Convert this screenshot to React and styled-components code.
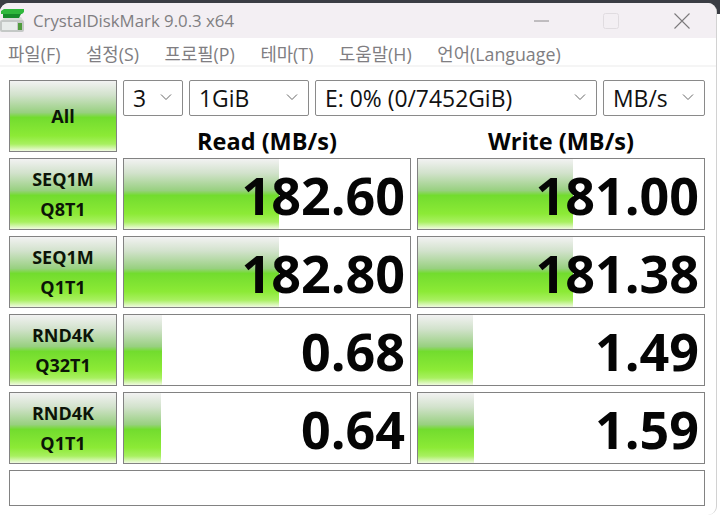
import styled, { createGlobalStyle } from 'styled-components';

const GlobalStyle = createGlobalStyle`
  html, body {
    margin: 0;
    padding: 0;
    width: 720px;
    height: 515px;
    overflow: hidden;
    background: #fff;
  }
  * {
    box-sizing: border-box;
  }
`;

const Screen = styled.div`
  width: 720px;
  height: 515px;
  padding-top: 3px;
  overflow: hidden;
  background: linear-gradient(180deg, #3a3d44 0, #3a3d44 14px, #fff 14px);
`;

const Window = styled.div`
  width: 717px;
  height: 512px;
  background: #fff;
  border-radius: 9px 9px 9px 0;
  border-right: 1px solid #d2d2d2;
  overflow: hidden;
  font-family: "Open Sans", "Noto Sans CJK KR", sans-serif;
`;

const TitleBar = styled.div`
  height: 35px;
  display: flex;
  align-items: center;
  background: #f3eff3;
`;

const AppIcon = styled.svg`
  width: 25px;
  height: 26px;
  flex: none;
  margin-top: 1px;
`;

const TitleText = styled.span`
  margin-left: 8px;
  font-size: 16.8px;
  color: #807e81;
`;

const WindowControls = styled.div`
  margin-left: auto;
  display: flex;
  align-items: center;
  gap: 53px;
  padding-right: 25px;
`;

const ControlIcon = styled.svg`
  width: 18px;
  height: 18px;
  display: block;
`;

const MenuBar = styled.div`
  height: 29px;
  display: flex;
  align-items: center;
  gap: 25.6px;
  padding: 2px 0 0 8px;
  border-bottom: 2px solid #f5f5f5;
  font-size: 17.8px;
  color: #807e82;
`;

const Content = styled.div`
  display: grid;
  grid-template-columns: 108px 288px 288px;
  grid-template-rows: 36px 30px repeat(4, 72px) 36px;
  column-gap: 6px;
  row-gap: 6px;
  padding: 13px 0 0 9px;
`;

const green = `linear-gradient(180deg,
  #f2f2f2 0%,
  #d2e2cc 20%,
  #98d080 45%,
  #72dc2e 52%,
  #8cea36 78%,
  #a8f060 90%,
  #f0fae0 100%)`;

const TestButton = styled.div`
  grid-column: 1;
  grid-row: ${(p) => p.$row};
  display: flex;
  flex-direction: column;
  align-items: center;
  justify-content: center;
  gap: 7px;
  border: 1px solid #828282;
  background: ${green};
  font-size: 18px;
  line-height: 23px;
  font-weight: 700;
  color: #0c1408;
`;

const Selects = styled.div`
  grid-column: 2 / span 2;
  grid-row: 1;
  display: flex;
  gap: 6px;
`;

const Select = styled.div`
  width: ${(p) => p.$width}px;
  display: flex;
  align-items: center;
  justify-content: space-between;
  padding: 0 10px 0 9px;
  border: 1px solid #8a8a8a;
  border-radius: 2px;
  font-size: 22.9px;
  color: #111;
`;

const Chevron = styled.svg`
  width: 12px;
  height: 8px;
  flex: none;
  margin-top: -3px;
`;

const ColumnHead = styled.div`
  grid-column: ${(p) => p.$col};
  grid-row: 2;
  align-self: end;
  margin-bottom: -3px;
  text-align: center;
  font-size: 23.5px;
  line-height: 27px;
  font-weight: 700;
  color: #050505;
`;

const ResultCell = styled.div`
  grid-column: ${(p) => p.$col};
  grid-row: ${(p) => p.$row};
  position: relative;
  display: flex;
  align-items: center;
  justify-content: flex-end;
  padding: 2px 5px 0 0;
  border: 1px solid #828282;
  background: #fff;
`;

const Bar = styled.div`
  position: absolute;
  left: 0;
  top: 0;
  bottom: 0;
  background: ${green};
`;

const Value = styled.span`
  position: relative;
  font-size: 52px;
  line-height: 1;
  font-weight: 700;
  color: #050505;
`;

const MessageBox = styled.div`
  grid-column: 1 / span 3;
  grid-row: 7;
  border: 1px solid #828282;
`;

const menus = ['파일(F)', '설정(S)', '프로필(P)', '테마(T)', '도움말(H)', '언어(Language)'];

const selects = [
  { label: '3', width: 60 },
  { label: '1GiB', width: 120 },
  { label: 'E: 0% (0/7452GiB)', width: 282 },
  { label: 'MB/s', width: 102 },
];

const results = [
  { top: 'SEQ1M', bottom: 'Q8T1', read: '182.60', readBar: 155, write: '181.00', writeBar: 155 },
  { top: 'SEQ1M', bottom: 'Q1T1', read: '182.80', readBar: 155, write: '181.38', writeBar: 155 },
  { top: 'RND4K', bottom: 'Q32T1', read: '0.68', readBar: 38, write: '1.49', writeBar: 55 },
  { top: 'RND4K', bottom: 'Q1T1', read: '0.64', readBar: 37, write: '1.59', writeBar: 56 },
];

function DiskIcon() {
  return (
    <AppIcon viewBox="0 0 25 26">
      <path d="M2 12 L5 9 H21 L23 12 Z" fill="#d8dcd8" />
      <rect x="0" y="12" width="24" height="12" rx="2" fill="#c4c8c6" />
      <rect x="2" y="14" width="15" height="8" fill="#e8ecea" />
      <rect x="18" y="15" width="4" height="7" fill="#4f9c3c" />
      <path d="M1 3 L4 1 H24 V4 L22 6 H1 Z" fill="#2fb83c" />
      <path d="M3 6 H21 L19 10 H3 Z" fill="#178c2a" />
    </AppIcon>
  );
}

function Arrow() {
  return (
    <Chevron viewBox="0 0 12 8">
      <path d="M1 1.5 L6 6.5 L11 1.5" fill="none" stroke="#666" strokeWidth="1" />
    </Chevron>
  );
}

export default function App() {
  return (
    <Screen>
      <GlobalStyle />
      <Window>
        <TitleBar>
          <DiskIcon />
          <TitleText>CrystalDiskMark 9.0.3 x64</TitleText>
          <WindowControls>
            <ControlIcon viewBox="0 0 18 18">
              <path d="M3 9 H18" stroke="#8c8a8c" strokeWidth="1" />
            </ControlIcon>
            <ControlIcon viewBox="0 0 18 18">
              <rect x="1.5" y="1.5" width="15" height="15" rx="2" fill="none" stroke="#e0dce0" />
            </ControlIcon>
            <ControlIcon viewBox="0 0 18 18">
              <path d="M1.5 1.5 L16.5 16.5 M16.5 1.5 L1.5 16.5" stroke="#7c7a7c" strokeWidth="1.1" />
            </ControlIcon>
          </WindowControls>
        </TitleBar>
        <MenuBar>
          {menus.map((m) => (
            <span key={m}>{m}</span>
          ))}
        </MenuBar>
        <Content>
          <TestButton $row="1 / span 2">All</TestButton>
          <Selects>
            {selects.map((s) => (
              <Select key={s.label} $width={s.width}>
                {s.label}
                <Arrow />
              </Select>
            ))}
          </Selects>
          <ColumnHead $col={2}>Read (MB/s)</ColumnHead>
          <ColumnHead $col={3}>Write (MB/s)</ColumnHead>
          {results.map((r, i) => (
            <TestButton key={i} $row={i + 3}>
              <span>{r.top}</span>
              <span>{r.bottom}</span>
            </TestButton>
          ))}
          {results.map((r, i) => [
            <ResultCell key={`r${i}`} $col={2} $row={i + 3}>
              <Bar style={{ width: r.readBar }} />
              <Value>{r.read}</Value>
            </ResultCell>,
            <ResultCell key={`w${i}`} $col={3} $row={i + 3}>
              <Bar style={{ width: r.writeBar }} />
              <Value>{r.write}</Value>
            </ResultCell>,
          ])}
          <MessageBox />
        </Content>
      </Window>
    </Screen>
  );
}
